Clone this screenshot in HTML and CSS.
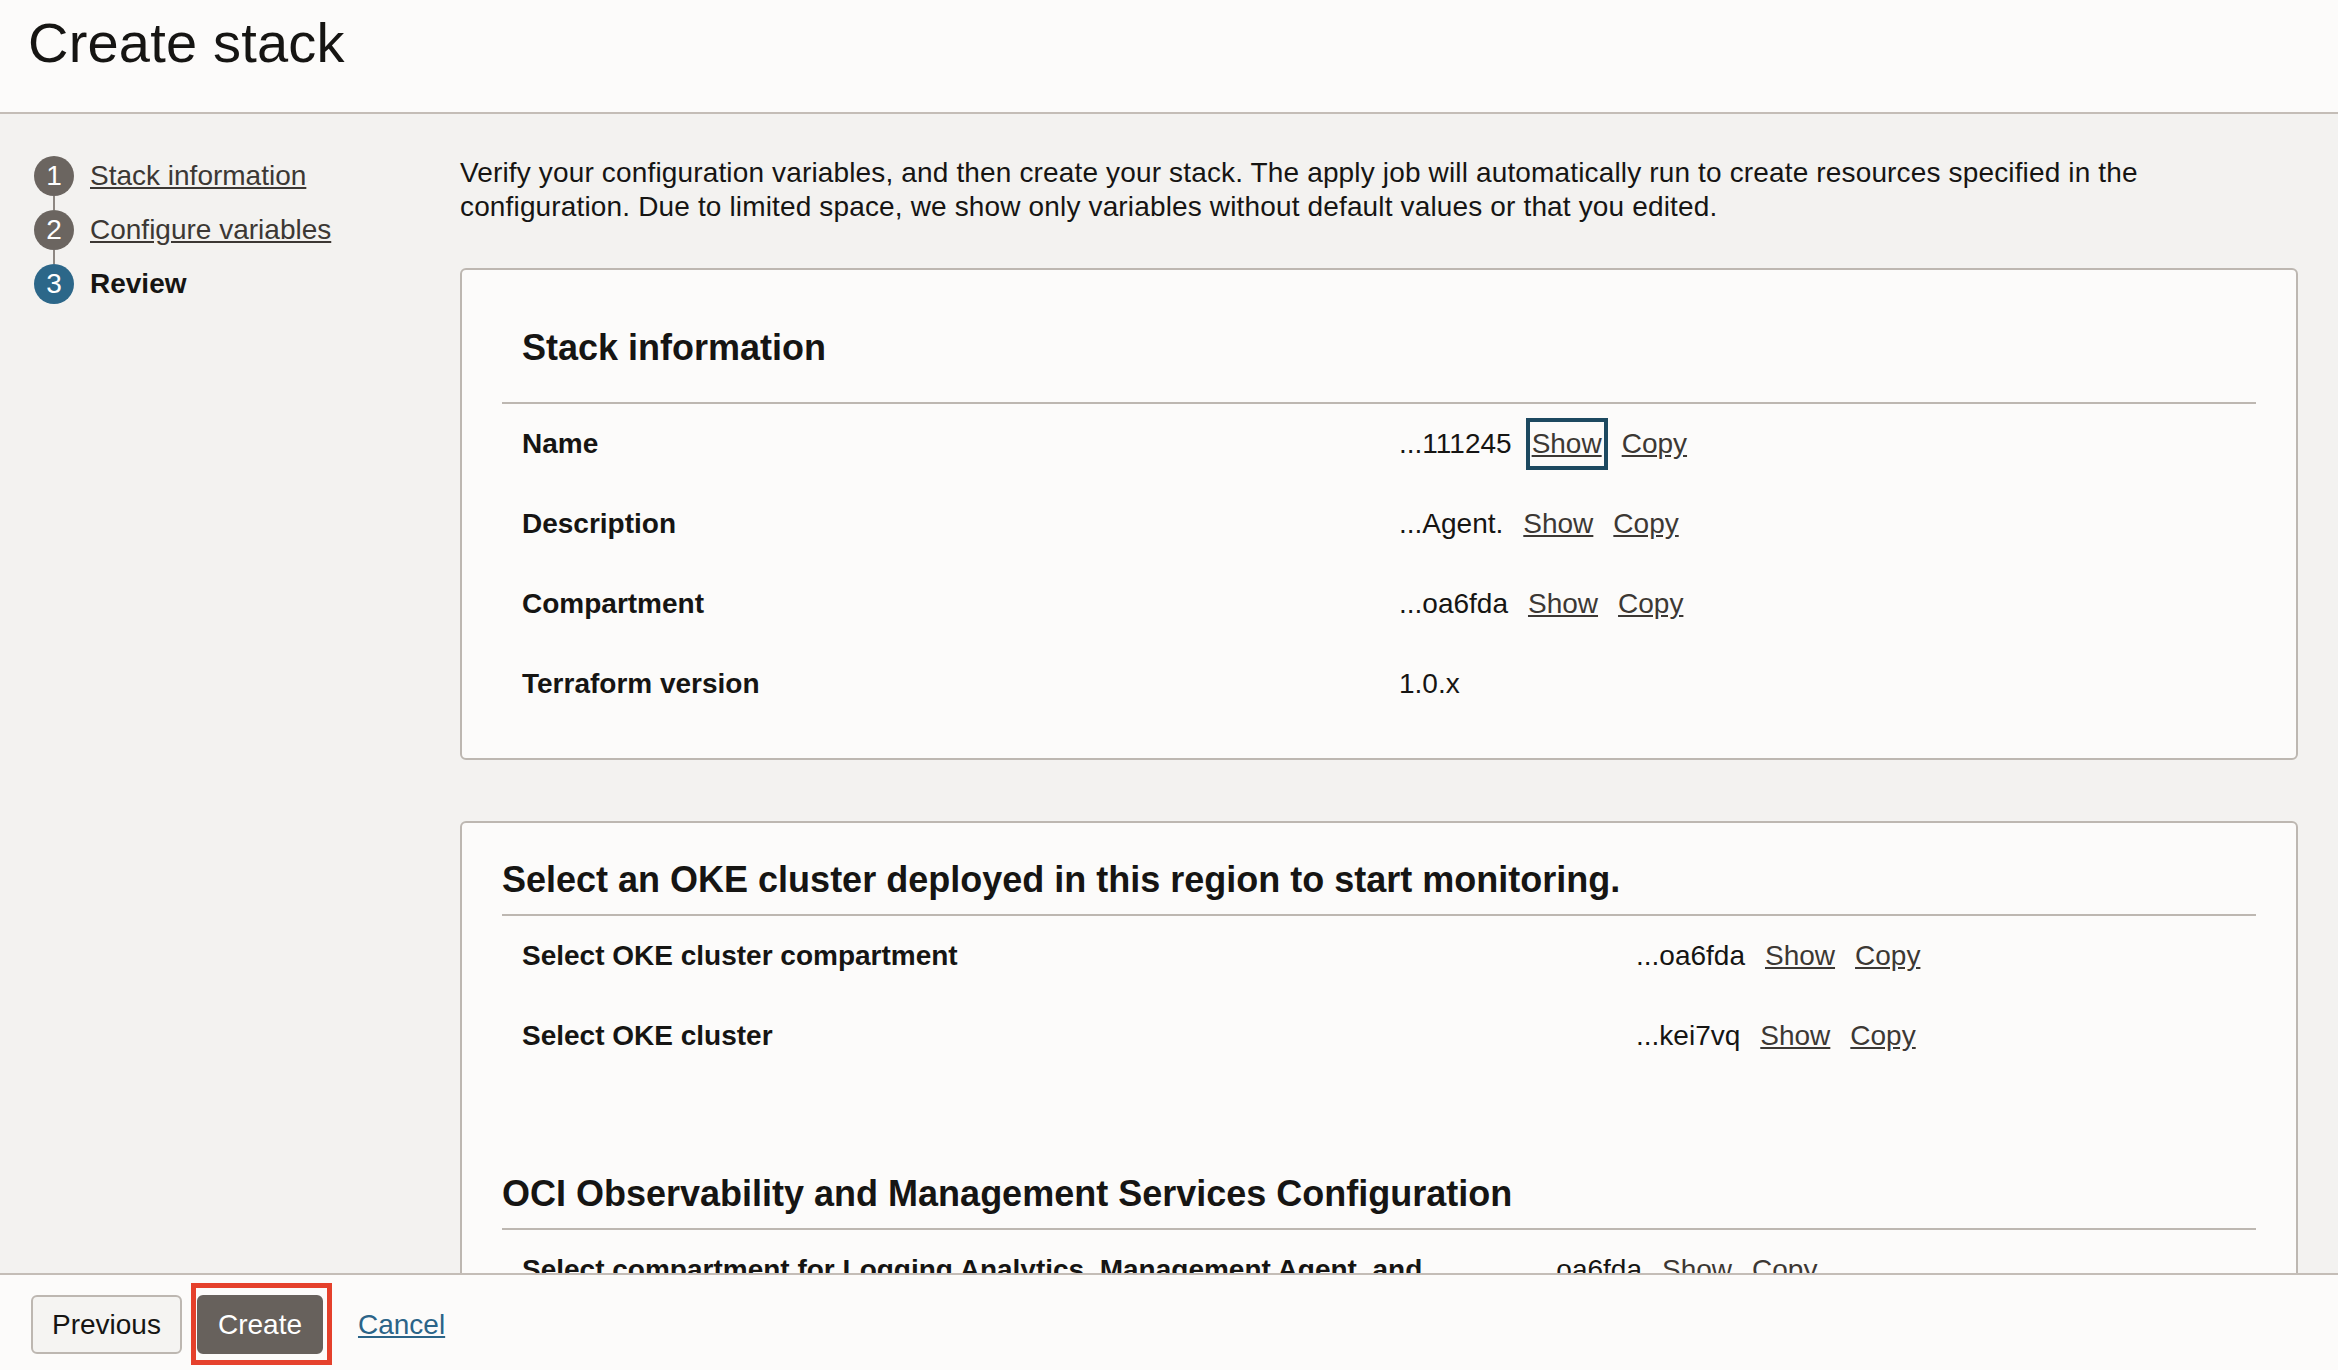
FILE: index.html
```html
<!DOCTYPE html>
<html lang="en">
<head>
<meta charset="utf-8">
<title>Create stack</title>
<link rel="stylesheet" href="styles.css">
</head>
<body>
<header class="page-header">
  <h1 class="page-title">Create stack</h1>
</header>
<div class="layout">
  <nav class="steps">
    <div class="step"><span class="step-num">1</span><a class="step-link" href="#">Stack information</a></div>
    <div class="step-connector"></div>
    <div class="step"><span class="step-num">2</span><a class="step-link" href="#">Configure variables</a></div>
    <div class="step-connector"></div>
    <div class="step"><span class="step-num active">3</span><span class="step-current">Review</span></div>
  </nav>
  <main class="content">
    <p class="intro">Verify your configuration variables, and then create your stack. The apply job will automatically run to create resources specified in the configuration. Due to limited space, we show only variables without default values or that you edited.</p>
    <section class="card card-info">
      <h2 class="card-title">Stack information</h2>
      <div class="kv-grid">
        <div class="kv-label">Name</div>
        <div class="kv-value"><span>...111245</span><a class="link focus" href="#">Show</a><a class="link" href="#">Copy</a></div>
        <div class="kv-label">Description</div>
        <div class="kv-value"><span>...Agent.</span><a class="link" href="#">Show</a><a class="link" href="#">Copy</a></div>
        <div class="kv-label">Compartment</div>
        <div class="kv-value"><span>...oa6fda</span><a class="link" href="#">Show</a><a class="link" href="#">Copy</a></div>
        <div class="kv-label">Terraform version</div>
        <div class="kv-value"><span>1.0.x</span></div>
      </div>
    </section>
    <section class="card card-vars">
      <div class="group">
        <h2 class="group-title">Select an OKE cluster deployed in this region to start monitoring.</h2>
        <div class="kv-grid grid-a">
          <div class="kv-label">Select OKE cluster compartment</div>
          <div class="kv-value"><span>...oa6fda</span><a class="link" href="#">Show</a><a class="link" href="#">Copy</a></div>
          <div class="kv-label">Select OKE cluster</div>
          <div class="kv-value"><span>...kei7vq</span><a class="link" href="#">Show</a><a class="link" href="#">Copy</a></div>
        </div>
      </div>
      <div class="group">
        <h2 class="group-title">OCI Observability and Management Services Configuration</h2>
        <div class="kv-grid grid-b">
          <div class="kv-label">Select compartment for Logging Analytics, Management Agent, and Monitoring resources</div>
          <div class="kv-value"><span>...oa6fda</span><a class="link" href="#">Show</a><a class="link" href="#">Copy</a></div>
          <div class="kv-label">Log group</div>
          <div class="kv-value"><span>...a7c2lq</span><a class="link" href="#">Show</a><a class="link" href="#">Copy</a></div>
        </div>
      </div>
    </section>
  </main>
</div>
<footer class="page-footer">
  <button class="btn btn-secondary" type="button">Previous</button>
  <button class="btn btn-primary" type="button">Create</button>
  <a class="cancel-link" href="#">Cancel</a>
</footer>
</body>
</html>
```

FILE: styles.css
```css
* {
  box-sizing: border-box;
}

html, body {
  margin: 0;
  height: 100%;
}

body {
  display: flex;
  flex-direction: column;
  height: 100vh;
  overflow: hidden;
  font-family: "Liberation Sans", Arial, sans-serif;
  font-size: 28px;
  color: #161513;
  background: #f3f2f0;
}

.page-header {
  flex: none;
  height: 114px;
  padding: 15px 28px 0;
  background: #fcfbfa;
  border-bottom: 2px solid #c4bdb7;
}

.page-title {
  margin: 0;
  font-size: 56px;
  font-weight: 400;
  line-height: 56px;
  letter-spacing: 0.2px;
}

.layout {
  flex: 1;
  min-height: 0;
  display: flex;
  overflow: hidden;
}

.steps {
  flex: none;
  width: 460px;
  padding: 42px 0 0 34px;
}

.step {
  display: flex;
  align-items: center;
  gap: 16px;
  height: 40px;
}

.step-num {
  flex: none;
  width: 40px;
  height: 40px;
  border-radius: 50%;
  background: #6b6560;
  color: #ffffff;
  display: flex;
  align-items: center;
  justify-content: center;
  font-size: 28px;
  line-height: 1;
}

.step-num.active {
  background: #2c6789;
}

.step-connector {
  width: 2px;
  height: 14px;
  margin-left: 19px;
  background: #8d8782;
}

.step-link {
  color: #3c3834;
  text-decoration: underline;
  line-height: 40px;
}

.step-current {
  font-weight: bold;
  line-height: 40px;
}

.content {
  flex: 1;
  min-width: 0;
  padding: 42px 40px 0 0;
}

.intro {
  max-width: 1760px;
  margin: 0 0 44px;
  line-height: 34px;
  letter-spacing: 0.15px;
}

.card {
  background: #fcfbfa;
  border: 2px solid #bdb7b1;
  border-radius: 6px;
}

.card-info {
  padding: 56px 40px 34px;
}

.card-vars {
  margin-top: 61px;
  padding: 35px 40px 0;
}

.card-title {
  margin: 0;
  padding: 0 20px 32px;
  font-size: 36px;
  line-height: 44px;
  font-weight: bold;
  border-bottom: 2px solid #bdb7b1;
}

.group + .group {
  margin-top: 96px;
}

.group-title {
  margin: 0;
  padding: 0 0 12px;
  font-size: 36px;
  line-height: 44px;
  font-weight: bold;
  border-bottom: 2px solid #bdb7b1;
}

.kv-grid {
  display: grid;
  grid-template-columns: 1fr 1fr;
}

.grid-a {
  grid-template-columns: 1114px 1fr;
}

.grid-b {
  grid-template-columns: 1011px 1fr;
}

.kv-label,
.kv-value {
  padding: 20px;
  line-height: 40px;
}

.kv-label {
  font-weight: bold;
}

.kv-value {
  display: flex;
  align-items: flex-start;
  gap: 20px;
}

.link {
  color: #3c3834;
  text-decoration: underline;
}

.link.focus {
  outline: 4px solid #1d4960;
  outline-offset: 2px;
}

.page-footer {
  flex: none;
  height: 97px;
  display: flex;
  align-items: flex-start;
  gap: 15px;
  padding: 20px 0 0 31px;
  background: #fcfbfa;
  border-top: 2px solid #c4bdb7;
}

.btn {
  height: 59px;
  padding: 0 19px;
  border: 2px solid #bdb7b1;
  border-radius: 6px;
  font-family: inherit;
  font-size: 28px;
  line-height: 55px;
}

.btn-secondary {
  background: #f5f4f2;
  color: #161513;
}

.btn-primary {
  position: relative;
  background: #67615c;
  border-color: #67615c;
  color: #ffffff;
}

.btn-primary::after {
  content: "";
  position: absolute;
  left: -8px;
  right: -11px;
  top: -14px;
  bottom: -13px;
  border: 5px solid #e5402b;
}

.cancel-link {
  margin-left: 20px;
  color: #2b6488;
  text-decoration: underline;
  line-height: 59px;
}
```
